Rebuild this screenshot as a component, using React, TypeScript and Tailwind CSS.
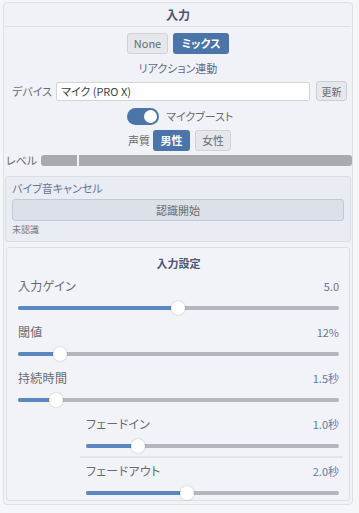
import React from 'react'

const font = { fontFamily: '"Noto Sans CJK JP", "Noto Sans", sans-serif' }

function Slider({ pct }: { pct: number }) {
  return (
    <div className="relative h-[14px] flex items-center">
      <div className="w-full h-[4px] rounded-full bg-[#b3b6bd]" />
      <div className="absolute left-0 h-[4px] rounded-full bg-[#5b87c1]" style={{ width: `${pct}%` }} />
      <div
        className="absolute w-[14px] h-[14px] -ml-[7px] rounded-full bg-white shadow-[0_0_2px_rgba(0,0,0,0.25)]"
        style={{ left: `${pct}%` }}
      />
    </div>
  )
}

function SliderRow({ label, value, pct }: { label: string; value: string; pct: number }) {
  return (
    <div className="flex flex-col">
      <div className="flex justify-between items-center h-[20px]">
        <span className="text-[12px] tracking-[0.3px] text-[#686b72]">{label}</span>
        <span className="text-[11px] text-[#6878a0]">{value}</span>
      </div>
      <div className="mt-[5px]">
        <Slider pct={pct} />
      </div>
    </div>
  )
}

export default function App() {
  return (
    <div className="w-[359px] h-[513px] bg-[#f5f6f9] pl-[3px] pt-[2px] [font-feature-settings:'palt']" style={font}>
      <div className="w-[350px] h-[503px] bg-[#f0f2f7] border border-[#dde0e6] rounded-sm flex flex-col">
        <div className="mx-[1px] h-[24px] border-b border-[#dcdfe5] flex items-center justify-center text-[12px] font-bold text-[#4a5672]">
          入力
        </div>
        <div className="flex justify-center gap-[5px] mt-[6px] text-[11px]">
          <button className="w-[41px] h-[21px] rounded-[3px] bg-[#e5e7eb] border border-[#cfd2d8] text-[#686b72]">None</button>
          <button className="w-[56px] h-[21px] rounded-[3px] bg-[#4b74a8] text-white font-bold">ミックス</button>
        </div>
        <div className="h-[14px] mt-[7px] flex items-center justify-center text-[11px] text-[#5d6a86]">
          リアクション連動
        </div>
        <div className="flex items-center mt-[6px] pl-[8px] pr-[5px] text-[11px]">
          <span className="w-[44px] text-[#686b72]">デバイス</span>
          <div className="w-[254px] h-[19px] bg-white border border-[#d2d5db] rounded-[2px] flex items-center px-[4px] text-[#3d4047]">
            マイク (PRO X)
          </div>
          <button className="ml-[6px] w-[31px] h-[20px] rounded-[3px] bg-[#e6e8ec] border border-[#cbced4] text-[10px] text-[#686b72]">更新</button>
        </div>
        <div className="flex items-center mt-[7px] ml-[123px] h-[17px]">
          <div className="w-[32px] h-[17px] rounded-full bg-[#4b74a8] flex items-center justify-end pr-[2px]">
            <div className="w-[13px] h-[13px] rounded-full bg-white" />
          </div>
          <span className="ml-[7px] text-[11px] text-[#686b72]">マイクブースト</span>
        </div>
        <div className="flex items-center mt-[5px] ml-[124px] text-[11px]">
          <span className="w-[25px] text-[#686b72]">声質</span>
          <button className="w-[37px] h-[21px] rounded-[3px] bg-[#4b74a8] text-white font-bold">男性</button>
          <button className="ml-[5px] w-[36px] h-[21px] rounded-[3px] bg-[#e5e7eb] border border-[#cfd2d8] text-[#686b72]">女性</button>
        </div>
        <div className="flex items-center mt-[3px] pl-[2px] h-[12px]">
          <span className="w-[35px] text-[11px] text-[#686b72]">レベル</span>
          <div className="flex-1 h-[11px] bg-[#a9aaad] rounded-[3px] flex">
            <div className="w-[36px]" />
            <div className="w-[2px] bg-[#f0f2f7]" />
          </div>
        </div>
        <div className="mx-[1px] mt-[10px] h-[66px] bg-[#e9ecf2] border border-[#d9dde4] rounded-[3px] px-[6px] flex flex-col">
          <div className="h-[22px] flex items-center text-[11px] text-[#66739a]">バイブ音キャンセル</div>
          <button className="h-[22px] rounded-[3px] bg-[#dce1e9] border border-[#c4c9d1] text-[11px] text-[#686b72]">認識開始</button>
          <div className="h-[18px] flex items-center text-[9px] text-[#75787f]">未認識</div>
        </div>
        <div className="mx-[2px] mt-[5px] h-[254px] border border-[#dcdfe5] rounded-[3px] bg-[#f1f3f8] pl-[11px] pr-[10px] flex flex-col">
          <div className="h-[28px] flex items-end justify-center text-[11px] font-bold text-[#4a5672] pb-[2px]">入力設定</div>
          <div className="flex flex-col gap-[7px] mt-[3px]">
            <SliderRow label="入力ゲイン" value="5.0" pct={49.7} />
            <SliderRow label="閾値" value="12%" pct={13} />
            <SliderRow label="持続時間" value="1.5秒" pct={11.8} />
          </div>
          <div className="ml-[62px] mr-[-4px] mt-[7px] flex flex-col">
            <div className="pl-[6px] pr-[4px] pb-[3px] border-b-2 border-[#e2e4e9]">
              <SliderRow label="フェードイン" value="1.0秒" pct={20.5} />
            </div>
            <div className="pl-[6px] pr-[4px] mt-[3px]">
              <SliderRow label="フェードアウト" value="2.0秒" pct={40} />
            </div>
          </div>
        </div>
      </div>
    </div>
  )
}
